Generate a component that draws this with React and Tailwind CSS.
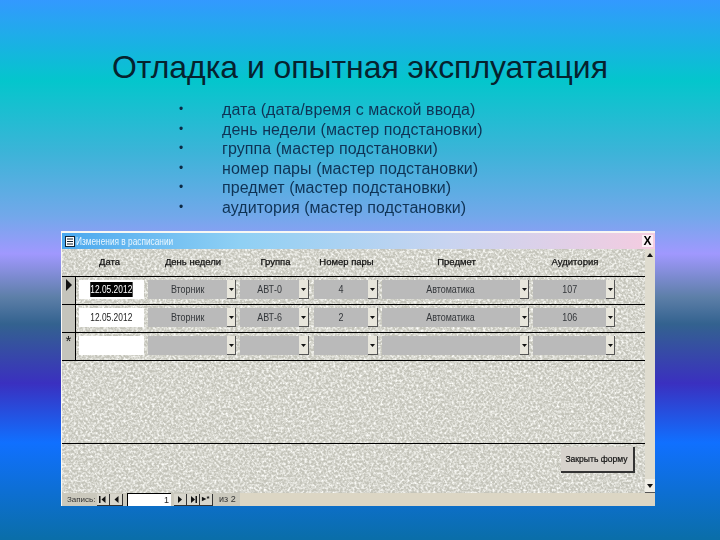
import { useId } from "react";

const topics = [
  "дата (дата/время с маской ввода)",
  "день недели (мастер подстановки)",
  "группа (мастер подстановки)",
  "номер пары (мастер подстановки)",
  "предмет (мастер подстановки)",
  "аудитория (мастер подстановки)",
];

const headers = [
  { label: "Дата", width: "w-[75px]" },
  { label: "День недели", width: "w-[92px]" },
  { label: "Группа", width: "w-[73px]" },
  { label: "Номер пары", width: "w-[69px]" },
  { label: "Предмет", width: "w-[151px]" },
  { label: "Аудитория", width: "w-[86px]" },
];

const rows = [
  { mark: "current", date: "12.05.2012", selected: true, day: "Вторник", group: "АВТ-0", num: "4", subject: "Автоматика", room: "107" },
  { mark: "", date: "12.05.2012", day: "Вторник", group: "АВТ-6", num: "2", subject: "Автоматика", room: "106" },
  { mark: "new", date: "", day: "", group: "", num: "", subject: "", room: "" },
];

function Noise() {
  const id = useId().replace(/:/g, "");
  return (
    <svg className="absolute inset-0 w-full h-full pointer-events-none" aria-hidden="true">
      <filter id={id} x="0" y="0" width="100%" height="100%">
        <feTurbulence type="fractalNoise" baseFrequency="0.42" numOctaves="2" seed="7" />
        <feColorMatrix type="matrix" values="0 0 0 0 1  0 0 0 0 1  0 0 0 0 0.97  2.2 0 0 0 -0.8" />
      </filter>
      <rect width="100%" height="100%" filter={`url(#${id})`} />
    </svg>
  );
}

function Arrow({ width = "w-[9px]" }) {
  return (
    <div className={`${width} h-[19px] shrink-0 bg-[#e8e6dc] border-r border-b border-[#555] flex items-center justify-center`}>
      <svg width="5" height="3" viewBox="0 0 5 3"><path d="M0 0h5L2.5 3z" fill="#111" /></svg>
    </div>
  );
}

function Combo({ value, width, arrow, ml }) {
  return (
    <div className={`flex ${ml}`}>
      <div className={`${width} h-[19px] bg-[#bababa] flex items-center justify-center text-[10.5px] text-[#33363a]`}>
        <span className="inline-block scale-x-[0.85]">{value}</span>
      </div>
      <Arrow width={arrow} />
    </div>
  );
}

function NavButton({ children }) {
  return (
    <div className="w-[13px] h-[12px] bg-[#d8d6cc] border-b border-r border-[#333] flex items-center justify-center text-[#111]">
      {children}
    </div>
  );
}

function Tri({ left, bar }) {
  return (
    <svg width="8" height="7" viewBox="0 0 8 7">
      {bar === "left" && <rect x="0" y="0" width="1.5" height="7" fill="#111" />}
      <path d={left ? "M6.5 0v7L2.5 3.5z" : "M2 0v7l4-3.5z"} fill="#111" />
      {bar === "right" && <rect x="6.5" y="0" width="1.5" height="7" fill="#111" />}
    </svg>
  );
}

export default function App() {
  return (
    <div className="w-[720px] h-[540px] overflow-hidden flex flex-col font-['Liberation_Sans',Arial,sans-serif] bg-[linear-gradient(180deg,#3399ff_0%,#04c6cc_15%,#3bb4d8_28%,#72a8ea_40%,#a098fe_47%,#5d7fa8_55%,#33628f_60%,#3a30c0_71%,#1070ff_82%,#0a6ea8_100%)]">
      <h1 className="mt-[49px] ml-[112px] text-[31.9px] leading-[36px] text-[#06222e] whitespace-nowrap">
        Отладка и опытная эксплуатация
      </h1>

      <ul className="mt-[15px] ml-[179px] text-[16px] leading-[19.5px] text-[#0f3355] blur-[0.25px]">
        {topics.map(t => (
          <li key={t} className="flex">
            <span className="w-[43px] text-[12px] text-[#0c2a44]">•</span>
            <span className="tracking-[0.07px]">{t}</span>
          </li>
        ))}
      </ul>

      <div className="mt-[14px] ml-[61px] w-[594px] h-[275px] flex flex-col border-t-2 border-l border-white/80 bg-[#dcd6c6] blur-[0.3px]">
        {/* title bar */}
        <div className="h-[16px] shrink-0 flex items-center pl-[3px] pr-[2px] bg-[linear-gradient(90deg,#4aa8ee_0%,#8fd0f4_30%,#c8d4f0_65%,#f4cce0_100%)]">
          <svg width="10" height="11" viewBox="0 0 10 11" className="shrink-0">
            <rect x="0.5" y="0.5" width="9" height="10" fill="#fff" stroke="#123" />
            <path d="M2 3h6M2 5.5h6M2 8h6" stroke="#123" />
          </svg>
          <span className="ml-[1px] text-[10px] text-[#e8f6ff] whitespace-nowrap origin-left scale-x-[0.83]">Изменения в расписании</span>
          <div className="ml-auto w-[11px] h-[12px] bg-white/70 flex items-center justify-center text-[12px] leading-none font-bold text-black">X</div>
        </div>

        <div className="flex-1 flex min-h-0">
          {/* form body */}
          <div className="relative flex-1 flex flex-col bg-[#c4c4ba] overflow-hidden">
            <Noise />
            <div className="relative flex-1 flex flex-col">
              <div className="h-[27px] flex items-center pl-[10px] text-[9.5px] text-[#111] [-webkit-text-stroke:0.25px_#111]">
                {headers.map(h => (
                  <div key={h.label} className={`${h.width} text-center`}>{h.label}</div>
                ))}
              </div>

              <div className="border-b border-black">
                {rows.map(row => (
                  <div key={row.mark + row.num} className="h-[28px] flex border-t border-black">
                    <div className="w-[14px] shrink-0 border-r border-black flex justify-center pt-[1px] bg-[#c4c4bc]">
                      {row.mark === "current" && (
                        <svg width="6" height="12" viewBox="0 0 6 12" className="mt-[1px]"><path d="M0 0l6 6-6 6z" fill="#111" /></svg>
                      )}
                      {row.mark === "new" && <span className="text-[15px] leading-[14px] text-[#111]">*</span>}
                    </div>
                    <div className="flex items-start pt-[3px] pl-[3px]">
                      <div className="w-[65px] h-[19px] bg-white flex items-center justify-center text-[10.5px] text-[#222]">
                        <span className={`inline-block scale-x-[0.8] ${row.selected ? "bg-black text-white" : ""}`}>{row.date}</span>
                      </div>
                      <Combo value={row.day} width="w-[79px]" ml="ml-[4px]" />
                      <Combo value={row.group} width="w-[59px]" arrow="w-[10px]" ml="ml-[4px]" />
                      <Combo value={row.num} width="w-[54px]" arrow="w-[10px]" ml="ml-[5px]" />
                      <Combo value={row.subject} width="w-[138px]" ml="ml-[4px]" />
                      <Combo value={row.room} width="w-[73px]" ml="ml-[4px]" />
                    </div>
                  </div>
                ))}
              </div>

              <div className="mt-[82px] border-t border-black flex-1 flex justify-end pt-[3px] pr-[10px]">
                <button className="w-[74px] h-[26px] bg-[#d6d2cc] border-r-2 border-b-2 border-[#333] text-[9.5px] text-[#111] whitespace-nowrap [-webkit-text-stroke:0.2px_#111]">
                  <span className="inline-block scale-x-[0.9]">Закрыть форму</span>
                </button>
              </div>
            </div>
          </div>

          {/* scrollbar */}
          <div className="w-[10px] shrink-0 bg-[#dfdccf] flex flex-col justify-between items-center">
            <div className="w-full h-[12px] flex items-center justify-center">
              <svg width="6" height="4" viewBox="0 0 6 4"><path d="M3 0l3 4H0z" fill="#111" /></svg>
            </div>
            <div className="w-full h-[14px] bg-[#f0eee6] border-b border-[#555] flex items-center justify-center">
              <svg width="6" height="4" viewBox="0 0 6 4"><path d="M0 0h6L3 4z" fill="#111" /></svg>
            </div>
          </div>
        </div>

        {/* record navigator */}
        <div className="h-[13px] shrink-0 flex items-stretch text-[8px] text-[#333]">
          <div className="w-[178px] flex items-center pl-[5px] bg-[#cbc9bd]">
            <span className="w-[30px] whitespace-nowrap">Запись:</span>
            <NavButton><Tri left bar="left" /></NavButton>
            <NavButton><Tri left /></NavButton>
            <div className="ml-[4px] mr-[3px] w-[44px] h-[13px] bg-white border-t border-l border-black text-right pr-[2px] text-[9px] leading-[12px] text-[#222]">1</div>
            <NavButton><Tri /></NavButton>
            <NavButton><Tri bar="right" /></NavButton>
            <NavButton><span className="text-[8px] leading-none font-bold">▸*</span></NavButton>
            <span className="ml-[6px] text-[9px] whitespace-nowrap">из 2</span>
          </div>
          <div className="flex-1 bg-[#dcd6c4]" />
        </div>
      </div>
    </div>
  );
}
